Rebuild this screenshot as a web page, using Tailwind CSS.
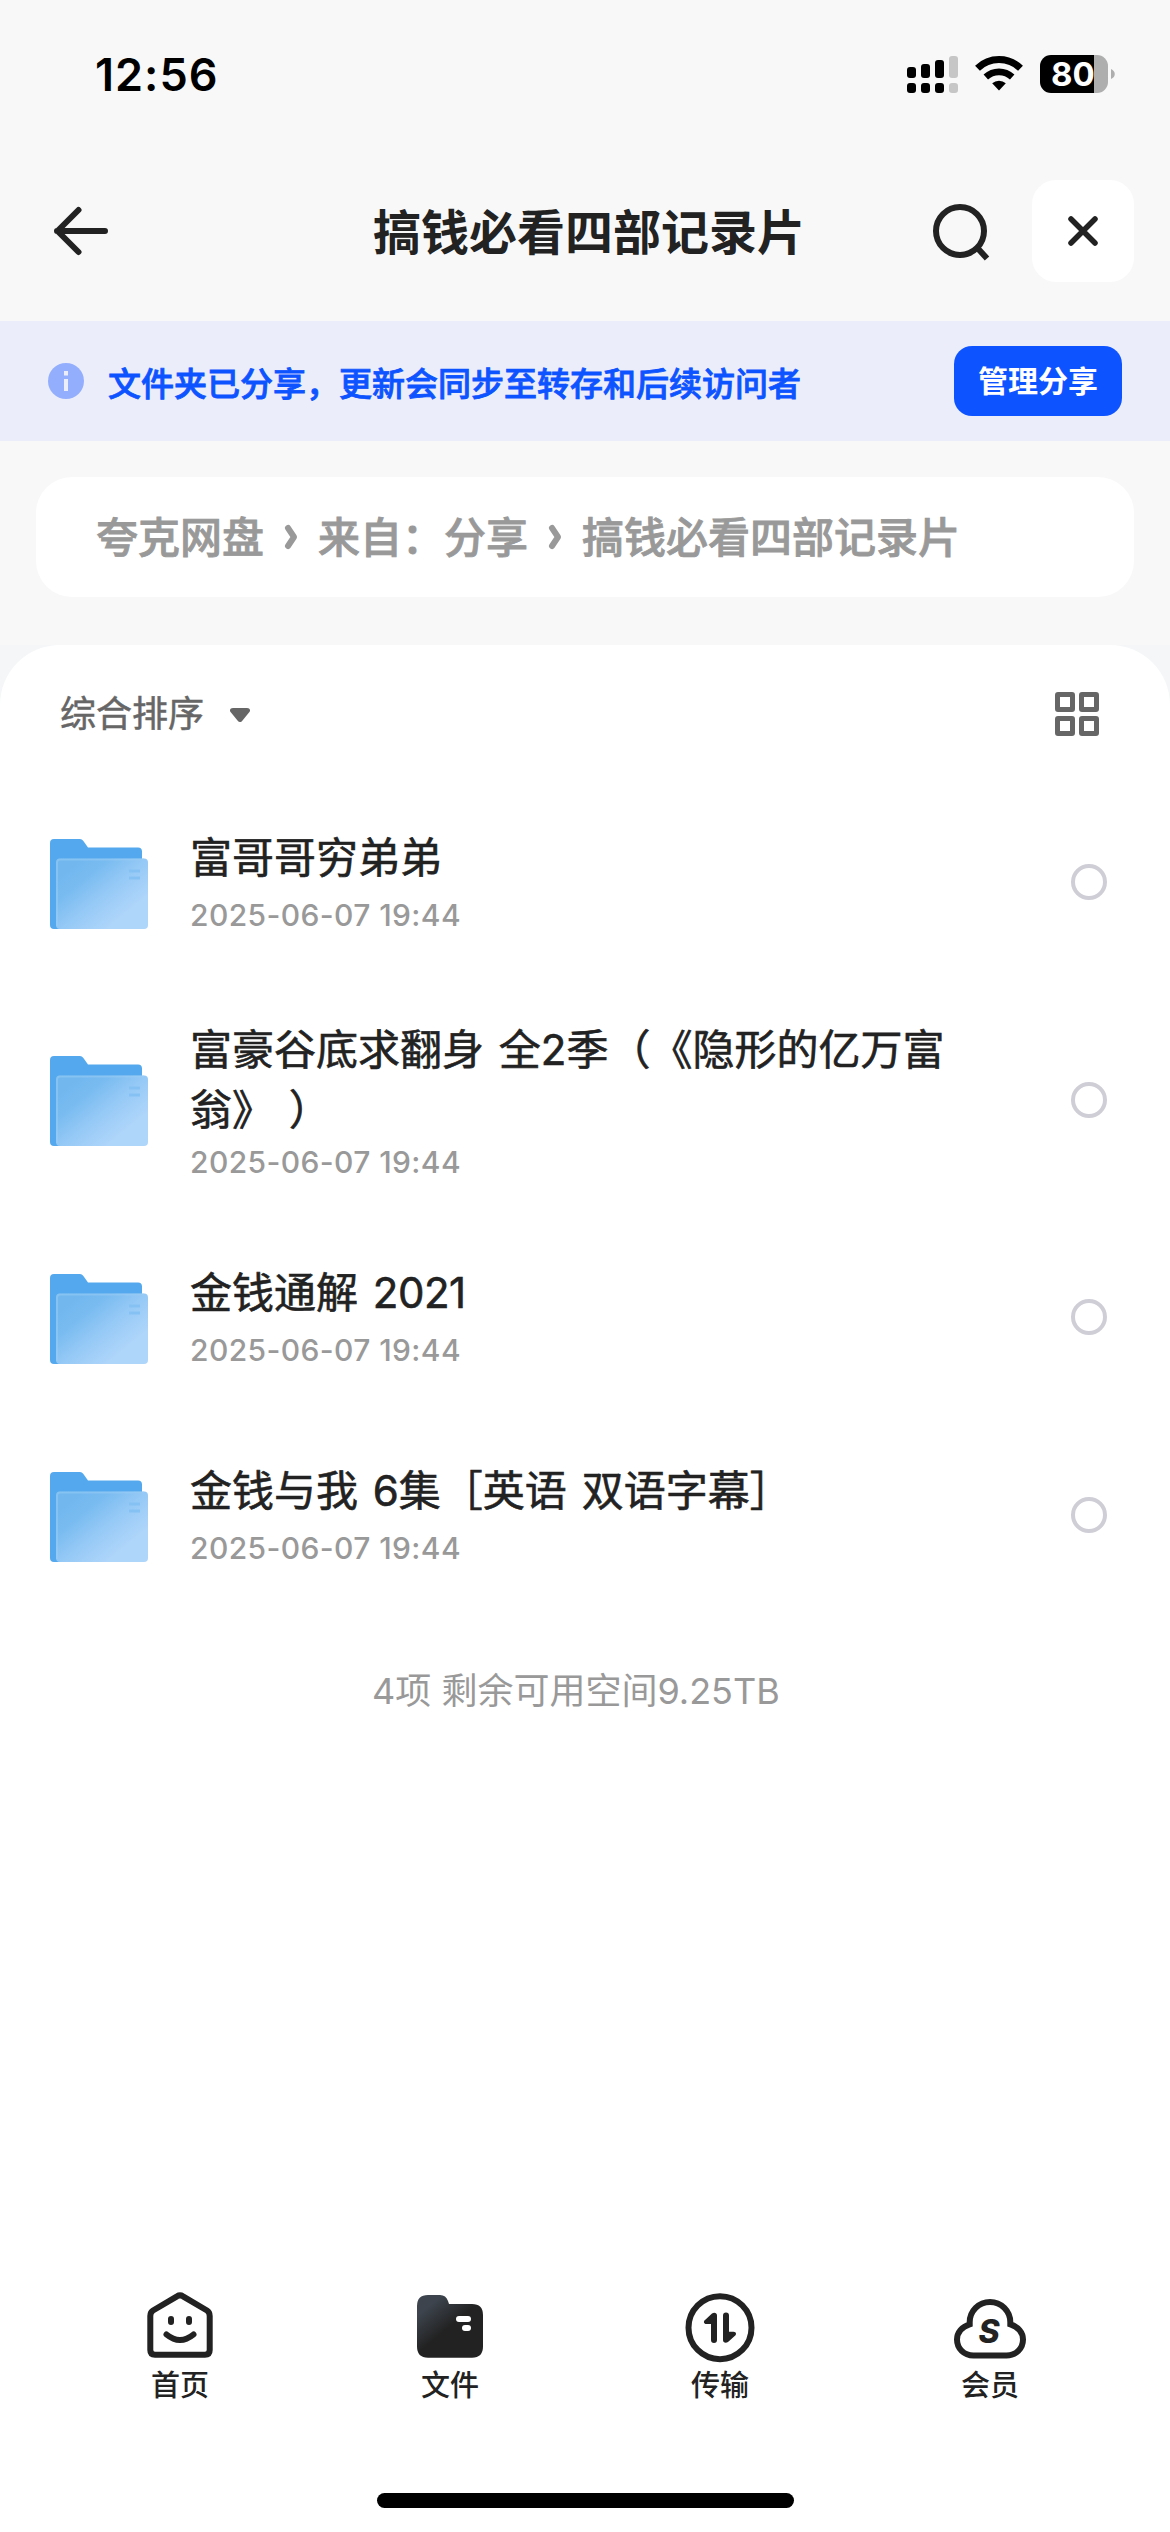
<!DOCTYPE html>
<html lang="zh-CN">
<head>
  <meta charset="UTF-8">
  <meta name="viewport" content="width=device-width, initial-scale=1.0">
  <title>搞钱必看四部记录片</title>
  <script src="https://cdn.jsdelivr.net/npm/@tailwindcss/browser@4"></script>
</head>
<body class="w-[1170px] h-[2532px] overflow-hidden bg-[#f8f8f8] font-['Inter','Noto_Sans_CJK_SC',sans-serif] text-[#222222] flex flex-col">

  <!-- status bar -->
  <div class="h-[132px] pl-[95px] pr-[55px] pt-[37px] flex justify-between items-start">
    <div class="h-[75px] leading-[75px] text-[45px] tracking-[1px] font-semibold text-black">12:56</div>
    <div class="flex items-center mt-[18px] h-[38px]">
      <svg class="w-[51px] h-[38px]" viewBox="0 0 51 38">
        <rect x="0" y="12" width="9" height="11" rx="3"/>
        <rect x="14" y="9" width="9" height="14" rx="3"/>
        <rect x="28" y="5" width="9" height="18" rx="3"/>
        <rect x="42" y="1" width="9" height="22" rx="3" fill="#c6c6c6"/>
        <rect x="0" y="28" width="9" height="10" rx="3"/>
        <rect x="14" y="28" width="9" height="10" rx="3"/>
        <rect x="28" y="28" width="9" height="10" rx="3"/>
        <rect x="42" y="28" width="9" height="10" rx="3" fill="#c6c6c6"/>
      </svg>
      <svg class="w-[50px] h-[38px] ml-4" viewBox="0 0 50 38" fill="none" stroke="#000">
        <path d="M3.5 13.2a31 31 0 0 1 43 0" stroke-width="7"/>
        <path d="M11.8 22a19.5 19.5 0 0 1 26.4 0" stroke-width="6.6"/>
        <path d="M25 35.5l-6.8-7.2a10 10 0 0 1 13.6 0z" fill="#000" stroke="none"/>
      </svg>
      <div class="ml-4 w-[68px] h-[38px] rounded-[11px] bg-linear-to-r from-black from-[79.5%] to-[#aeaeae] to-[79.5%] flex items-center">
        <span class="pl-[11px] text-[33px] font-bold leading-[38px] text-white">80</span>
      </div>
      <svg class="w-1 h-[10px] ml-[3px]" viewBox="0 0 4 10"><path d="M0 0c5 2 5 8 0 10z" fill="#aeaeae"/></svg>
    </div>
  </div>

  <!-- title bar -->
  <div class="h-[189px] pl-[51px] pr-9 flex items-center">
    <div class="w-[322px] h-[198px] flex items-center mt-[9px]">
      <svg class="w-[60px] h-[60px]" viewBox="0 0 60 60" fill="none" stroke="#222222" stroke-width="6" stroke-linecap="round" stroke-linejoin="round">
        <path d="M54 30H6M27.500 9L6.500 30L27.500 51"/>
      </svg>
    </div>
    <h1 class="w-[432px] text-[48px] leading-[60px] font-bold whitespace-nowrap mt-[13px]">搞钱必看四部记录片</h1>
    <svg class="w-[60px] h-[60px] ml-auto mt-[9px]" viewBox="0 0 60 60" fill="none" stroke="#222222" stroke-width="6">
      <circle cx="30" cy="30" r="24"/>
      <path d="M47 46.500L57 57.500"/>
    </svg>
    <div class="w-[102px] h-[102px] ml-[42px] mt-[9px] rounded-[24px] bg-white flex items-center justify-center">
      <svg class="w-9 h-9" viewBox="0 0 36 36" fill="none" stroke="#222222" stroke-width="5.500" stroke-linecap="round">
        <path d="M6 6L30 30M30 6L6 30"/>
      </svg>
    </div>
  </div>

  <!-- share notice -->
  <div class="h-[120px] bg-[#ebeefa] pl-12 pr-12 flex items-center">
    <svg class="w-9 h-9" viewBox="0 0 36 36">
      <circle cx="18" cy="18" r="18" fill="#94aefe"/>
      <rect x="16" y="8" width="4" height="4.500" fill="#ebeefa"/>
      <rect x="16" y="16" width="4" height="12" fill="#ebeefa"/>
    </svg>
    <p class="ml-6 mt-[5px] text-[33px] leading-[48px] font-medium [-webkit-text-stroke:0.8px_#0d53ff] text-[#0d53ff] whitespace-nowrap">文件夹已分享，更新会同步至转存和后续访问者</p>
    <button class="ml-auto w-[168px] h-[70px] rounded-[18px] bg-[#0d53ff] text-white text-[30px] leading-[70px] font-bold">管理分享</button>
  </div>

  <!-- breadcrumb -->
  <div class="h-[120px] mt-9 mx-9 px-[60px] rounded-[36px] bg-white flex items-center text-[42px] leading-[60px] font-medium [-webkit-text-stroke:0.8px_#999999] text-[#999999] whitespace-nowrap">
    <span class="mt-0.5">夸克网盘</span>
    <svg class="w-[54px] h-[30px]" viewBox="0 0 54 30" fill="none" stroke="#999999" stroke-width="6" stroke-linecap="round" stroke-linejoin="round"><path d="M24 6L30 15L24 24"/></svg>
    <span class="mt-0.5">来自：分享</span>
    <svg class="w-[54px] h-[30px]" viewBox="0 0 54 30" fill="none" stroke="#999999" stroke-width="6" stroke-linecap="round" stroke-linejoin="round"><path d="M24 6L30 15L24 24"/></svg>
    <span class="mt-0.5">搞钱必看四部记录片</span>
  </div>

  <!-- file list -->
  <div class="mt-12 flex-1 bg-[#f4f6f8]">
    <div class="h-full bg-white rounded-t-[60px] flex flex-col">
      <div class="h-[138px] pl-[60px] pr-[71px] flex items-center">
        <span class="text-[36px] leading-[48px] [-webkit-text-stroke:0.5px_#666666] text-[#666666]">综合排序</span>
        <svg class="w-5 h-[14px] ml-[26px] mt-0.5" viewBox="0 0 20 14"><path d="M3 0h14c3 0 4 2.500 2 4.500l-6.500 8c-1.500 2-3.500 2-5 0L1 4.500C-1 2.500 0 0 3 0z" fill="#666666"/></svg>
        <svg class="w-11 h-11 ml-auto" viewBox="0 0 44 44" fill="none" stroke="#666666" stroke-width="5">
          <rect x="2.500" y="2.500" width="15" height="15" rx=".5"/>
          <rect x="26.500" y="2.500" width="15" height="15" rx=".5"/>
          <rect x="2.500" y="26.500" width="15" height="15" rx=".5"/>
          <rect x="26.500" y="26.500" width="15" height="15" rx=".5"/>
        </svg>
      </div>

      <ul class="[text-spacing-trim:space-all]">
        <li class="h-[198px] pl-[50px] pr-[63px] flex items-center">
          <svg class="w-[98px] h-[90px] mt-[3px]" viewBox="0 0 98 90">
            <defs>
              <linearGradient id="front" x1="0.1" y1="0.2" x2="0.85" y2="0.9">
                <stop offset="0" stop-color="#72b8ef"/>
                <stop offset=".2" stop-color="#78bbf0"/>
                <stop offset=".5" stop-color="#95c9f6"/>
                <stop offset=".85" stop-color="#aed5fa"/>
              </linearGradient>
            </defs>
            <g id="folder">
              <path d="M4 0H30q2 0 3.200 1.800L38 8.500H88q4 0 4 4V40L10 90H4q-4 0-4-4V4q0-4 4-4z" fill="#54a9ee"/>
              <rect x="6" y="19.500" width="92" height="70.500" rx="4" fill="url(#front)"/>
              <path d="M7 87V23.500q0-3 3-3H94" fill="none" stroke="#9bcdf6" stroke-opacity=".5" stroke-width="2"/>
              <rect x="79" y="30.500" width="11" height="3" fill="#86c1f4"/>
              <rect x="79" y="37.500" width="11" height="3" fill="#86c1f4"/>
            </g>
          </svg>
          <div class="ml-[42px] w-[780px] -mt-[3px]">
            <p class="text-[42px] leading-[60px] [-webkit-text-stroke:0.6px_#222222] [word-spacing:3px]">富哥哥穷弟弟</p>
            <p class="text-[30px] leading-[36px] mt-[9px] tracking-[0.4px] font-medium text-[#999999]">2025-06-07 19:44</p>
          </div>
          <div class="ml-auto w-9 h-9 rounded-full border-4 border-[#cfced6]"></div>
        </li>
        <li class="h-[237px] pl-[50px] pr-[63px] flex items-center">
          <svg class="w-[98px] h-[90px] mt-[3px]" viewBox="0 0 98 90"><use href="#folder"/></svg>
          <div class="ml-[42px] w-[780px]">
            <p class="text-[42px] leading-[60px] [-webkit-text-stroke:0.6px_#222222] [word-spacing:3px]">富豪谷底求翻身 全2季（《隐形的亿万富<br>翁》 ）</p>
            <p class="text-[30px] leading-[36px] mt-1 tracking-[0.4px] font-medium text-[#999999]">2025-06-07 19:44</p>
          </div>
          <div class="ml-auto w-9 h-9 rounded-full border-4 border-[#cfced6]"></div>
        </li>
        <li class="h-[198px] pl-[50px] pr-[63px] flex items-center">
          <svg class="w-[98px] h-[90px] mt-[3px]" viewBox="0 0 98 90"><use href="#folder"/></svg>
          <div class="ml-[42px] w-[780px] -mt-[3px]">
            <p class="text-[42px] leading-[60px] [-webkit-text-stroke:0.6px_#222222] [word-spacing:3px]">金钱通解 <span class="tracking-[-0.5px]">2021</span></p>
            <p class="text-[30px] leading-[36px] mt-[9px] tracking-[0.4px] font-medium text-[#999999]">2025-06-07 19:44</p>
          </div>
          <div class="ml-auto w-9 h-9 rounded-full border-4 border-[#cfced6]"></div>
        </li>
        <li class="h-[198px] pl-[50px] pr-[63px] flex items-center">
          <svg class="w-[98px] h-[90px] mt-[3px]" viewBox="0 0 98 90"><use href="#folder"/></svg>
          <div class="ml-[42px] w-[780px] -mt-[3px]">
            <p class="text-[42px] leading-[60px] [-webkit-text-stroke:0.6px_#222222] [word-spacing:3px]">金钱与我 6集［英语 双语字幕］</p>
            <p class="text-[30px] leading-[36px] mt-[9px] tracking-[0.4px] font-medium text-[#999999]">2025-06-07 19:44</p>
          </div>
          <div class="ml-auto w-9 h-9 rounded-full border-4 border-[#cfced6]"></div>
        </li>
      </ul>

      <p class="mt-[53px] pl-[372px] text-[36px] leading-[48px] text-[#999999] whitespace-nowrap">4项 剩余可用空间9.25TB</p>

      <!-- tab bar -->
      <nav class="mt-auto px-[45px] h-[204px] grid grid-cols-4 text-[29px] leading-[36px] font-medium">
        <div class="flex flex-col items-center">
          <svg class="w-[72px] h-[72px]" viewBox="0 0 72 72" fill="none" stroke="#222222" stroke-width="6" stroke-linecap="round" stroke-linejoin="round">
            <path d="M33 7.300Q36 5.400 39 7.300L63 21.500Q65.700 23.200 65.700 27V61Q65.700 65.700 61 65.700H11Q6.300 65.700 6.300 61V27Q6.300 23.200 9 21.500z"/>
            <path d="M27 30v3M45 30v3M22.500 45.500Q36 56.500 49.500 45.500"/>
          </svg>
          <span class="mt-[7px]">首页</span>
        </div>
        <div class="flex flex-col items-center">
          <svg class="w-[72px] h-[72px]" viewBox="0 0 72 72">
            <defs>
              <linearGradient id="tab" x1="0.15" y1="0.1" x2="0.5" y2="0.5">
                <stop offset=".15" stop-color="#3d444d"/>
                <stop offset="1" stop-color="#222222"/>
              </linearGradient>
            </defs>
            <path d="M14 6H26Q32 6 34 12L35 15H58Q69 15 69 26V57.500Q69 68.700 58 68.700H14Q3 68.700 3 57.500V17Q3 6 14 6z" fill="url(#tab)"/>
            <rect x="42" y="27" width="15" height="6" rx="3" fill="#fff"/>
            <rect x="48" y="36" width="9" height="6" rx="3" fill="#fff"/>
          </svg>
          <span class="mt-[7px]">文件</span>
        </div>
        <div class="flex flex-col items-center">
          <svg class="w-[72px] h-[75px]" viewBox="0 0 72 75">
            <circle cx="36" cy="38.700" r="31.500" fill="none" stroke="#222222" stroke-width="6"/>
            <path d="M33 26.500V51a3 3 0 0 1-6 0V35h-4.500c-3 0-3.300-3-1.200-4.300L28 24.500c2.500-1.500 5-.5 5 2z" fill="#222222"/>
            <path d="M39 51V26.500a3 3 0 0 1 6 0V42.700h4.500c3 0 3.300 3 1.200 4.300L44 53c-2.500 1.500-5 .5-5-2z" fill="#222222"/>
          </svg>
          <span class="mt-1">传输</span>
        </div>
        <div class="flex flex-col items-center">
          <svg class="w-[72px] h-[72px]" viewBox="0 0 72 72">
            <path d="M19.500 66.500H52.500C62 66.500 69 59.500 69 50.500C69 43.500 64 37.500 56.300 35.300V33.300A20.300 20.300 0 0 0 15.700 33.300V35.300C8 37.500 3 43.500 3 50.500C3 59.500 10 66.500 19.500 66.500z" fill="none" stroke="#222222" stroke-width="6"/>
            <text x="35" y="54" text-anchor="middle" font-size="32" font-weight="800" font-style="italic" fill="#222222">S</text>
          </svg>
          <span class="mt-[7px]">会员</span>
        </div>
      </nav>

      <div class="h-[39px] flex justify-center">
        <div class="w-[417px] h-[15px] rounded-full bg-black"></div>
      </div>
    </div>
  </div>
</body>
</html>
